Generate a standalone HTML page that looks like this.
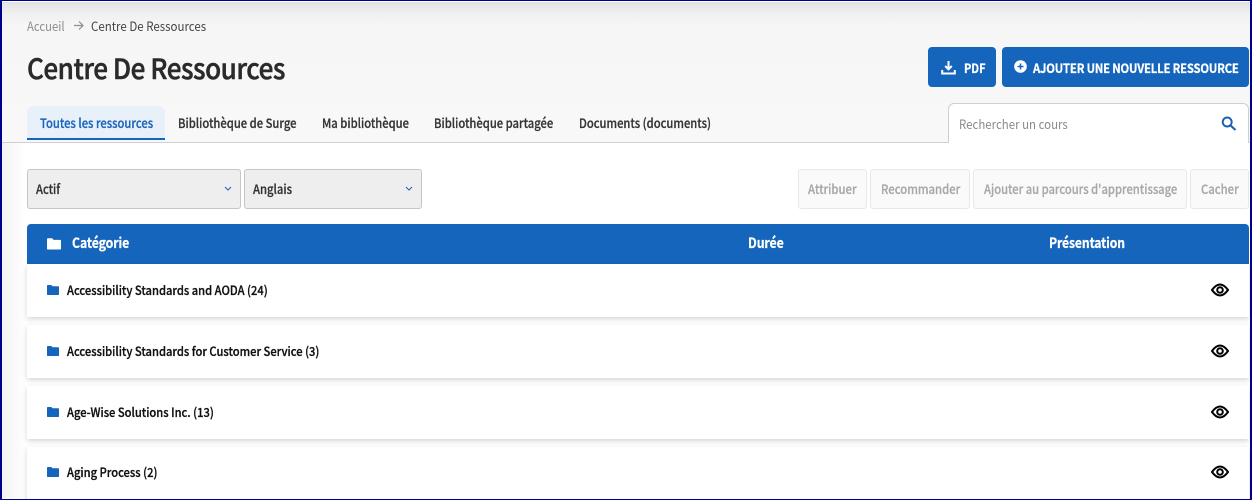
<!DOCTYPE html>
<html lang="fr"><head><meta charset="utf-8"><title>Centre De Ressources</title>
<style>
*{box-sizing:border-box}
html,body{margin:0;padding:0;width:1252px;height:500px;overflow:hidden;background:#fff}
body{position:relative;font-family:"Noto Sans CJK JP","Liberation Sans",sans-serif;color:#2b2b2b}
.a{position:absolute;white-space:nowrap}
.x{transform-origin:0 50%}
.t{line-height:20px;font-size:13px;font-weight:500}
.s{-webkit-text-stroke:.25px currentColor}
.hdr{left:2px;top:2px;width:1248px;height:141px;background:linear-gradient(#e2e2e2 0,#efefef 10px,#f6f6f6 24px,#f8f8f8 100%);border-bottom:1px solid #cfcfcf}
.btn{background:#1565bd;border-radius:4px;top:47px;height:40px;color:#fff}
.sel{top:169px;height:40px;background:#eeeeee;border:1px solid #c6c6c6;border-radius:3px}
.dis{top:169px;height:40px;background:#fafafa;border:1px solid #e8e8e8;border-radius:3px}
.dt{top:178.5px;color:#a8a8a8;transform:scaleX(.87)}
.row{left:27px;width:1222px;background:#fff;box-shadow:0 2px 5px rgba(0,0,0,.17)}
.lab{left:67px;font-size:12.5px;font-weight:500;color:#111;line-height:20px;transform:scaleX(.893);-webkit-text-stroke:.3px currentColor}
.th{top:233px;color:#fff;font-size:14px;font-weight:700;line-height:20px;letter-spacing:-.1px;-webkit-text-stroke:.25px #fff}
.tab{top:112.5px;color:#333;transform:scaleX(.863)}
</style></head><body>
<div class="a" style="left:2px;top:143px;width:24px;height:355px;background:linear-gradient(90deg,#f3f3f3,#fff)"></div>
<div class="a hdr"></div>

<div class="a t x" style="left:27px;top:16px;font-size:12.5px;font-weight:400;color:#8e8e8e;transform:scaleX(.905)">Accueil</div>
<svg class="a" style="left:73px;top:20px" width="11" height="11" viewBox="0 0 11 11"><path d="M1 5.5H10M6 1.5L10 5.5L6 9.5" fill="none" stroke="#8e8e8e" stroke-width="1.2"/></svg>
<div class="a t x" style="left:91px;top:16px;font-size:12.5px;font-weight:400;color:#444;transform:scaleX(.92)">Centre De Ressources</div>
<div class="a x" style="left:27px;top:50px;font-size:28px;font-weight:500;line-height:36px;color:#2a2a2a;letter-spacing:-.5px;transform:scaleX(.931);-webkit-text-stroke:.5px currentColor">Centre De Ressources</div>

<div class="a btn" style="left:928px;width:68px"></div>
<svg class="a" style="left:941px;top:60px" width="15" height="15" viewBox="0 0 15 15"><path d="M7.5 1V9M4.2 6L7.5 9.3L10.8 6M1.2 10V13.5H13.8V10" fill="none" stroke="#fff" stroke-width="2"/></svg>
<div class="a t x" style="left:964px;top:58px;color:#fff;font-size:12.5px;font-weight:700;transform:scaleX(.875);-webkit-text-stroke:.25px #fff">PDF</div>
<div class="a btn" style="left:1002px;width:247px"></div>
<svg class="a" style="left:1014px;top:60px" width="13" height="13" viewBox="0 0 13 13"><circle cx="6.5" cy="6.5" r="6.3" fill="#fff"/><path d="M6.5 3.5V9.5M3.5 6.5H9.5" stroke="#1565bd" stroke-width="1.5"/></svg>
<div class="a t x" style="left:1033px;top:58px;color:#fff;font-size:12.5px;font-weight:700;letter-spacing:-.2px;transform:scaleX(.903);-webkit-text-stroke:.25px #fff">AJOUTER UNE NOUVELLE RESSOURCE</div>

<div class="a" style="left:27px;top:106px;width:138px;height:34px;background:#e8f0fa;border-bottom:2px solid #1565bd;border-radius:6px 6px 0 0"></div>
<div class="a t x s tab" style="left:40px;color:#1a64bb">Toutes les ressources</div>
<div class="a t x s tab" style="left:178px">Bibliothèque de Surge</div>
<div class="a t x s tab" style="left:322px">Ma bibliothèque</div>
<div class="a t x s tab" style="left:434px">Bibliothèque partagée</div>
<div class="a t x s tab" style="left:579px">Documents (documents)</div>

<div class="a" style="left:948px;top:103px;width:301px;height:40px;background:#fff;border:1px solid #cfcfcf;border-bottom:none;border-radius:6px 6px 0 0"></div>
<div class="a t x" style="left:959px;top:113.5px;font-size:12.5px;font-weight:400;color:#8a8a8a;transform:scaleX(.916)">Rechercher un cours</div>
<svg class="a" style="left:1221px;top:116px" width="16" height="15" viewBox="0 0 16 15"><circle cx="6.2" cy="6" r="4.5" fill="none" stroke="#1a5fb0" stroke-width="1.9"/><path d="M9.6 9.5L14.5 14" stroke="#1a5fb0" stroke-width="2.1"/></svg>

<div class="a sel" style="left:27px;width:214px"></div>
<div class="a t x s" style="left:36px;top:178.5px;color:#333;transform:scaleX(.86)">Actif</div>
<svg class="a" style="left:224px;top:186px" width="8" height="5" viewBox="0 0 8 5"><path d="M1 1L4 4L7 1" fill="none" stroke="#1a64bb" stroke-width="1"/></svg>
<div class="a sel" style="left:244px;width:178px"></div>
<div class="a t x s" style="left:253px;top:178.5px;color:#333;transform:scaleX(.867)">Anglais</div>
<svg class="a" style="left:405px;top:186px" width="8" height="5" viewBox="0 0 8 5"><path d="M1 1L4 4L7 1" fill="none" stroke="#1a64bb" stroke-width="1"/></svg>

<div class="a dis" style="left:798px;width:69px"></div>
<div class="a dis" style="left:870px;width:100px"></div>
<div class="a dis" style="left:973px;width:214px"></div>
<div class="a dis" style="left:1190px;width:59px"></div>
<div class="a t x s dt" style="left:808px">Attribuer</div>
<div class="a t x s dt" style="left:881px">Recommander</div>
<div class="a t x s dt" style="left:983.5px;transform:scaleX(.861)">Ajouter au parcours d'apprentissage</div>
<div class="a t x s dt" style="left:1201px">Cacher</div>

<div class="a" style="left:27px;top:224px;width:1222px;height:40px;background:#1565bd;border-radius:4px 4px 0 0"></div>
<svg class="a" style="left:47px;top:238px" width="14" height="12" viewBox="0 0 15 13" preserveAspectRatio="none"><path d="M0 1.2Q0 .3 1 .3H5.5L7 2H14Q15 2 15 3V11.5Q15 12.5 14 12.5H1Q0 12.5 0 11.5Z" fill="#fff"/></svg>
<div class="a x th" style="left:72px;transform:scaleX(.877)">Catégorie</div>
<div class="a x th" style="left:748px;transform:scaleX(.878)">Durée</div>
<div class="a x th" style="left:1049px;transform:scaleX(.866)">Présentation</div>

<div class="a row" style="top:264px;height:53px"></div>
<div class="a row" style="top:325px;height:53px"></div>
<div class="a row" style="top:386px;height:53px"></div>
<div class="a row" style="top:447px;height:53px"></div>

<svg class="a" style="left:47px;top:285px" width="12" height="10" viewBox="0 0 12 10"><path d="M0 .8Q0 0 .8 0H4.3L5.5 1.3H11.2Q12 1.3 12 2V9.2Q12 10 11.2 10H.8Q0 10 0 9.2Z" fill="#1565bd"/></svg>
<svg class="a" style="left:47px;top:346px" width="12" height="10" viewBox="0 0 12 10"><path d="M0 .8Q0 0 .8 0H4.3L5.5 1.3H11.2Q12 1.3 12 2V9.2Q12 10 11.2 10H.8Q0 10 0 9.2Z" fill="#1565bd"/></svg>
<svg class="a" style="left:47px;top:407px" width="12" height="10" viewBox="0 0 12 10"><path d="M0 .8Q0 0 .8 0H4.3L5.5 1.3H11.2Q12 1.3 12 2V9.2Q12 10 11.2 10H.8Q0 10 0 9.2Z" fill="#1565bd"/></svg>
<svg class="a" style="left:47px;top:467px" width="12" height="10" viewBox="0 0 12 10"><path d="M0 .8Q0 0 .8 0H4.3L5.5 1.3H11.2Q12 1.3 12 2V9.2Q12 10 11.2 10H.8Q0 10 0 9.2Z" fill="#1565bd"/></svg>

<div class="a lab x" style="top:280px">Accessibility Standards and AODA (24)</div>
<div class="a lab x" style="top:341px">Accessibility Standards for Customer Service (3)</div>
<div class="a lab x" style="top:402px">Age-Wise Solutions Inc. (13)</div>
<div class="a lab x" style="top:462px">Aging Process (2)</div>

<svg class="a" style="left:1211px;top:283px" width="18" height="14" viewBox="0 0 18 14"><path d="M1 7Q5 1.5 9 1.5T17 7Q13 12.5 9 12.5T1 7Z" fill="none" stroke="#000" stroke-width="2"/><circle cx="9" cy="7" r="2.8" fill="none" stroke="#000" stroke-width="2"/></svg>
<svg class="a" style="left:1211px;top:344px" width="18" height="14" viewBox="0 0 18 14"><path d="M1 7Q5 1.5 9 1.5T17 7Q13 12.5 9 12.5T1 7Z" fill="none" stroke="#000" stroke-width="2"/><circle cx="9" cy="7" r="2.8" fill="none" stroke="#000" stroke-width="2"/></svg>
<svg class="a" style="left:1211px;top:405px" width="18" height="14" viewBox="0 0 18 14"><path d="M1 7Q5 1.5 9 1.5T17 7Q13 12.5 9 12.5T1 7Z" fill="none" stroke="#000" stroke-width="2"/><circle cx="9" cy="7" r="2.8" fill="none" stroke="#000" stroke-width="2"/></svg>
<svg class="a" style="left:1211px;top:465px" width="18" height="14" viewBox="0 0 18 14"><path d="M1 7Q5 1.5 9 1.5T17 7Q13 12.5 9 12.5T1 7Z" fill="none" stroke="#000" stroke-width="2"/><circle cx="9" cy="7" r="2.8" fill="none" stroke="#000" stroke-width="2"/></svg>

<div class="a" style="left:0;top:0;width:1252px;height:500px;border:1px solid #00008b;border-left-width:2px;border-right-width:2px;pointer-events:none"></div>
</body></html>
